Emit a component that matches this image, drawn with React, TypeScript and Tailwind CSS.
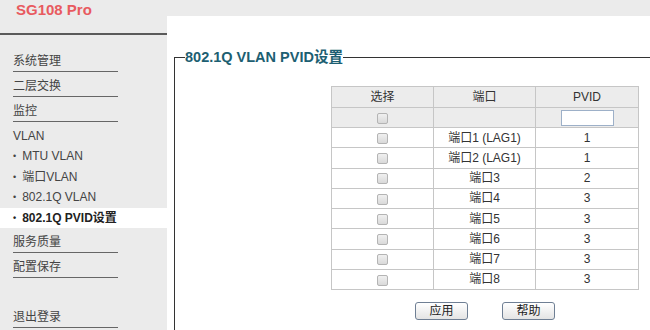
import React from 'react';

const font = { fontFamily: '"Liberation Sans", "Noto Sans CJK SC", sans-serif' };

const ports = [
    { name: '端口1 (LAG1)', pvid: 1 },
    { name: '端口2 (LAG1)', pvid: 1 },
    { name: '端口3', pvid: 2 },
    { name: '端口4', pvid: 3 },
    { name: '端口5', pvid: 3 },
    { name: '端口6', pvid: 3 },
    { name: '端口7', pvid: 3 },
    { name: '端口8', pvid: 3 },
];

const MenuItem = ({ label }: { label: string }) => (
    <div className="ml-[13px] flex h-[25px] w-[105px] items-end border-b border-[#666] pb-[2px] text-[12px] leading-4 text-[#444]">
        {label}
    </div>
);

const SubItem = ({ label, active }: { label: string; active?: boolean }) => (
    <div
        className={
            'flex h-[20.5px] items-center pl-[13px] text-[12px] leading-4 ' +
            (active ? 'bg-white font-bold text-[#222]' : 'text-[#444]')
        }
    >
        <span className="mr-[6px] text-[9px]">•</span>
        {label}
    </div>
);

const Check = () => (
    <span className="inline-block h-[11px] w-[11px] rounded-[2px] border border-[#b4b4b4] bg-gradient-to-b from-[#f0f0f0] to-[#d9d9d9] align-middle" />
);

const Btn = ({ label }: { label: string }) => (
    <button className="h-[18px] w-[53px] rounded-[3px] border border-[#6f7f94] bg-gradient-to-b from-white to-[#e4e4e4] text-[12px] leading-4 text-[#222]">
        {label}
    </button>
);

export default function App() {
    return (
        <div className="flex h-[330px] w-[650px] overflow-hidden bg-[#ebebeb]" style={font}>
            <div className="flex w-[167px] shrink-0 flex-col">
                <div className="h-[35px] border-b-2 border-[#5a5a5a] pl-[16px] pt-[1px] text-[15px] font-bold leading-[18px] text-[#e85a5f]">
                    SG108 Pro
                </div>
                <div className="pt-[12px]">
                    <MenuItem label="系统管理" />
                    <MenuItem label="二层交换" />
                    <MenuItem label="监控" />
                    <div className="mt-[4px] flex h-[20px] items-center pl-[13px] text-[12px] leading-4 text-[#444]">VLAN</div>
                    <SubItem label="MTU VLAN" />
                    <SubItem label="端口VLAN" />
                    <SubItem label="802.1Q VLAN" />
                    <SubItem label="802.1Q PVID设置" active />
                    <MenuItem label="服务质量" />
                    <MenuItem label="配置保存" />
                    <div className="h-[25px]" />
                    <MenuItem label="退出登录" />
                </div>
            </div>
            <div className="flex-1 pt-[16px]">
                <div className="h-full bg-white pl-[7px] pt-[32px]">
                    <fieldset className="h-[400px] border-l border-t border-r-0 border-b-0 border-[#333] pl-[10px]">
                        <legend className="px-0 text-[14.5px] font-bold leading-[18px] text-[#1d5f72]">
                            802.1Q VLAN PVID设置
                        </legend>
                        <div className="ml-[146px] mt-[20px] w-[308px]">
                            <table className="w-[308px] border-collapse text-center text-[12px] leading-4 text-[#333]">
                                <thead>
                                    <tr className="h-[21px] bg-[#ececec]">
                                        <th className="w-[102px] border border-[#c6c6c6] font-normal">选择</th>
                                        <th className="w-[102px] border border-[#c6c6c6] font-normal">端口</th>
                                        <th className="border border-[#c6c6c6] font-normal">PVID</th>
                                    </tr>
                                </thead>
                                <tbody>
                                    <tr className="h-[20px] bg-[#ececec]">
                                        <td className="border border-[#c6c6c6]">
                                            <Check />
                                        </td>
                                        <td className="border border-[#c6c6c6]" />
                                        <td className="border border-[#c6c6c6]">
                                            <input className="mx-auto block h-[16px] w-[53px] border border-[#9db0c8] bg-white" />
                                        </td>
                                    </tr>
                                    {ports.map((p) => (
                                        <tr key={p.name} className="h-[20.25px]">
                                            <td className="border border-[#c6c6c6]">
                                                <Check />
                                            </td>
                                            <td className="border border-[#c6c6c6]">{p.name}</td>
                                            <td className="border border-[#c6c6c6]">{p.pvid}</td>
                                        </tr>
                                    ))}
                                </tbody>
                            </table>
                            <div className="mt-[12px] flex justify-center gap-[34px]">
                                <Btn label="应用" />
                                <Btn label="帮助" />
                            </div>
                        </div>
                    </fieldset>
                </div>
            </div>
        </div>
    );
}
